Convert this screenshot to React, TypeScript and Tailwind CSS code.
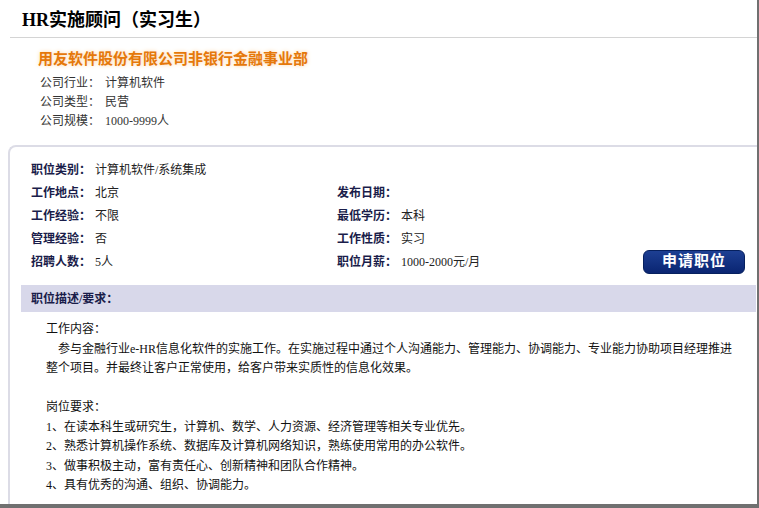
const infoRows = [
  { label: "公司行业：", value: "计算机软件" },
  { label: "公司类型：", value: "民营" },
  { label: "公司规模：", value: "1000-9999人" },
];

const requirements = [
  "1、在读本科生或研究生，计算机、数学、人力资源、经济管理等相关专业优先。",
  "2、熟悉计算机操作系统、数据库及计算机网络知识，熟练使用常用的办公软件。",
  "3、做事积极主动，富有责任心、创新精神和团队合作精神。",
  "4、具有优秀的沟通、组织、协调能力。",
];

function Field({ label, value }: { label: string; value?: string }) {
  return (
    <div className="flex items-center">
      <span className="font-bold text-[#1a1d4a]">{label}</span>
      {value && <span className="ml-[4px] text-[#222]">{value}</span>}
    </div>
  );
}

export default function App() {
  return (
    <div className="w-[759px] h-[508px] overflow-hidden bg-white border-r-2 border-b-4 border-[#707070] text-[12px] font-['Liberation_Serif','Noto_Sans_CJK_SC',serif]">
      {/* job title */}
      <div className="ml-[10px] h-[38px] border-b border-[#d4d4d4] pl-[12px] pt-[8px]">
        <h1 className="text-[18px] leading-[24px] font-bold text-black">
          HR实施顾问（实习生）
        </h1>
      </div>

      {/* company */}
      <div className="pl-[38px] pt-[11px]">
        <h2 className="text-[15px] leading-[20px] font-bold text-[#e5780a] [text-shadow:0_0_4px_#fbd3a0]">
          用友软件股份有限公司非银行金融事业部
        </h2>
        <div className="mt-[5px] pl-[2px] text-[#333]">
          {infoRows.map((r) => (
            <div key={r.label} className="flex leading-[19px]">
              <span className="w-[65px]">{r.label}</span>
              <span>{r.value}</span>
            </div>
          ))}
        </div>
      </div>

      {/* job detail panel */}
      <div className="ml-[8px] mt-[14px] h-[400px] border-l-2 border-t-2 border-[#dcdce6] rounded-tl-[8px]">
        <div className="pt-[11px] pl-[21px]">
          <div className="h-[23px] flex">
            <Field label="职位类别：" value="计算机软件/系统集成" />
          </div>
          <div className="h-[23px] flex">
            <div className="w-[306px] flex">
              <Field label="工作地点：" value="北京" />
            </div>
            <Field label="发布日期：" />
          </div>
          <div className="h-[23px] flex">
            <div className="w-[306px] flex">
              <Field label="工作经验：" value="不限" />
            </div>
            <Field label="最低学历：" value="本科" />
          </div>
          <div className="h-[23px] flex">
            <div className="w-[306px] flex">
              <Field label="管理经验：" value="否" />
            </div>
            <Field label="工作性质：" value="实习" />
          </div>
          <div className="h-[23px] flex items-center">
            <div className="w-[306px] flex">
              <Field label="招聘人数：" value="5人" />
            </div>
            <div className="w-[306px] flex">
              <Field label="职位月薪：" value="1000-2000元/月" />
            </div>
            <button className="w-[102px] h-[24px] rounded-[6px] border border-[#06205e] bg-gradient-to-b from-[#1d3f93] to-[#0a2572] text-white text-[15px] font-bold leading-none tracking-[1px]">
              申请职位
            </button>
          </div>
        </div>

        <div className="mt-[12px] ml-[11px] mr-[1px] h-[27px] bg-[#d8d8ea] pl-[10px] flex items-center">
          <span className="font-bold text-[#1a1d4a]">职位描述/要求：</span>
        </div>

        {/* description */}
        <div className="pl-[36px] pt-[8px] text-[#111] leading-[19.5px]">
          <p>工作内容：</p>
          <p className="w-[690px] indent-[12px]">
            参与金融行业e-HR信息化软件的实施工作。在实施过程中通过个人沟通能力、管理能力、协调能力、专业能力协助项目经理推进整个项目。并最终让客户正常使用，给客户带来实质性的信息化效果。
          </p>
          <p className="mt-[19.5px]">岗位要求：</p>
          {requirements.map((item) => (
            <p key={item}>{item}</p>
          ))}
        </div>
      </div>
    </div>
  );
}
